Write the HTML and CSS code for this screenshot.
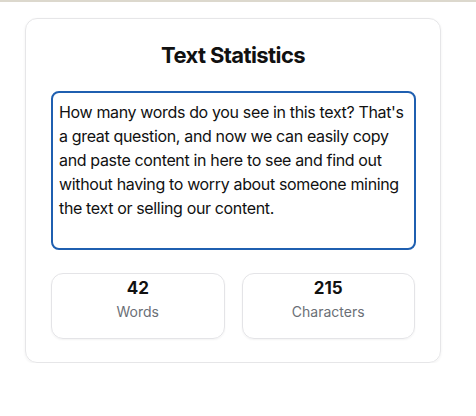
FILE: index.html
```html
<!DOCTYPE html>
<html lang="en">
<head>
<meta charset="utf-8">
<title>Text Statistics</title>
<link rel="stylesheet" href="styles.css">
</head>
<body>
<div class="topline"></div>
<main class="card">
  <h1 class="title">Text Statistics</h1>
  <textarea class="input" spellcheck="false">How many words do you see in this text? That's a great question, and now we can easily copy and paste content in here to see and find out without having to worry about someone mining the text or selling our content.</textarea>
  <div class="stats">
    <div class="stat">
      <div class="num">42</div>
      <div class="label">Words</div>
    </div>
    <div class="stat">
      <div class="num">215</div>
      <div class="label">Characters</div>
    </div>
  </div>
</main>
</body>
</html>
```

FILE: styles.css
```css
* { box-sizing: border-box; }
html, body { margin: 0; padding: 0; background: #ffffff; }
body {
  font-family: Inter, "Liberation Sans", sans-serif;
  color: #111111;
}
.topline {
  height: 2px;
  background: #dcd8cd;
}
.card {
  margin: 16px 0 0 25px;
  width: 416px;
  height: 345px;
  border: 1px solid #e6e6e8;
  border-radius: 12px;
  box-shadow: 0 1px 3px rgba(0,0,0,0.06);
  padding: 20px 25px 0 25px;
  display: flex;
  flex-direction: column;
}
.title {
  margin: 0;
  text-align: center;
  font-size: 22px;
  line-height: 32px;
  font-weight: 700;
  letter-spacing: -0.6px;
  color: #111;
}
.input {
  margin-top: 20px;
  width: 365px;
  height: 159px;
  flex: none;
  border: 2px solid #1f5fb0;
  border-radius: 8px;
  padding: 7px 6px;
  font-family: Inter, "Liberation Sans", sans-serif;
  font-size: 16px;
  letter-spacing: -0.35px;
  line-height: 24px;
  color: #111;
  resize: none;
  outline: none;
  overflow: hidden;
}
.stats {
  margin-top: 23px;
  display: grid;
  grid-template-columns: 1fr 1fr;
  column-gap: 17px;
}
.stat {
  height: 66px;
  border: 1px solid #e4e4e7;
  border-radius: 12px;
  box-shadow: 0 1px 2px rgba(0,0,0,0.05);
  text-align: center;
  padding-top: 2px;
}
.num {
  font-size: 17px;
  font-weight: 700;
  line-height: 24px;
  color: #111;
}
.label {
  margin-top: 2px;
  font-size: 14px;
  line-height: 20px;
  color: #6b6f76;
}
```
